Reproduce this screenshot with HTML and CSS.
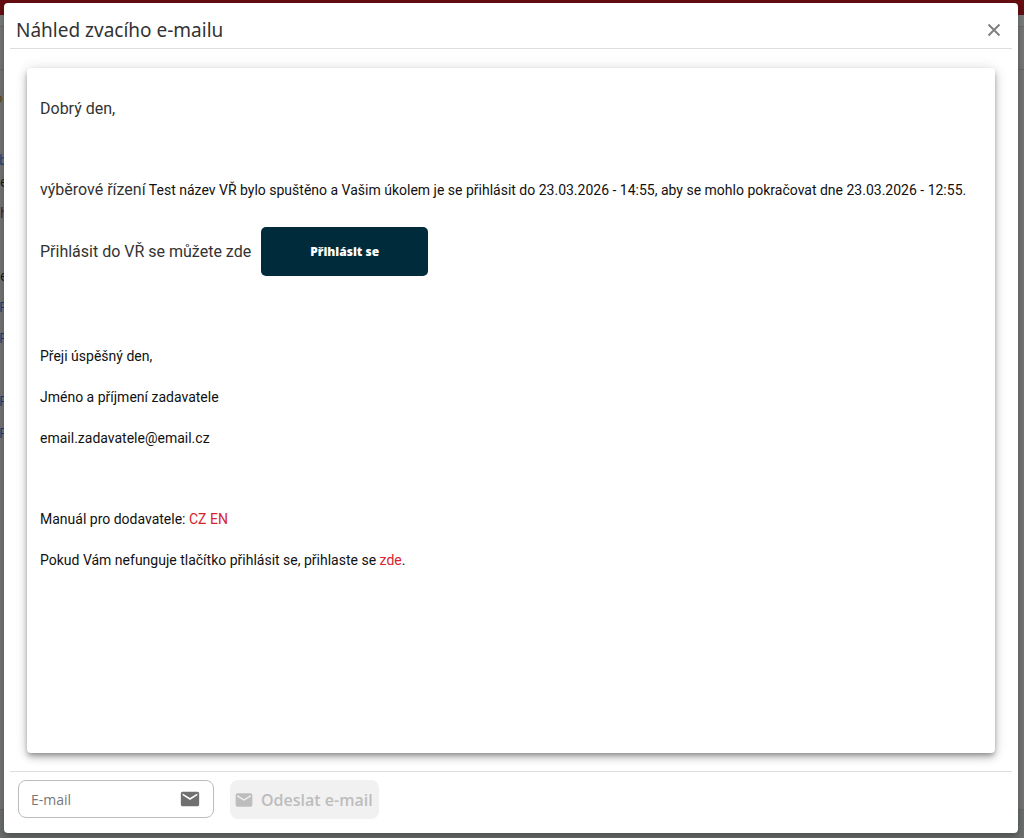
FILE: index.html
```html
<!DOCTYPE html>
<html lang="cs">
<head>
<meta charset="utf-8">
<meta name="viewport" content="width=device-width, initial-scale=1">
<title>Náhled zvacího e-mailu</title>
<link rel="stylesheet" href="styles.css">
</head>
<body>
<div class="page">
  <div class="backdrop" aria-hidden="true">
    <div class="backdrop-bar"></div>
    <div class="backdrop-tabs"></div>
    <div class="backdrop-body"></div>
    <div class="backdrop-foot"></div>
    <span class="trace trace-gold" style="top:88px">o</span>
    <span class="trace trace-blue" style="top:150px">b</span>
    <span class="trace" style="top:172px">e</span>
    <span class="trace trace-red" style="top:203px">h</span>
    <span class="trace" style="top:266px">e</span>
    <span class="trace trace-blue" style="top:297px">P</span>
    <span class="trace trace-blue" style="top:328px">P</span>
    <span class="trace trace-blue" style="top:391px">P</span>
    <span class="trace trace-blue" style="top:423px">P</span>
  </div>
  <section class="dialog" role="dialog" aria-modal="true" aria-labelledby="dialog-title">
    <header class="dialog-header">
      <h1 class="dialog-title" id="dialog-title">Náhled zvacího e-mailu</h1>
      <button class="close" type="button" aria-label="Zavřít">
        <svg width="14" height="14" viewBox="0 0 14 14"><path d="M1.500 1.500l11 11M12.500 1.500l-11 11" fill="none" stroke="currentColor" stroke-width="2"/></svg>
      </button>
    </header>
    <main class="dialog-content">
      <article class="card">
        <p class="lead">Dobrý den,</p>
        <p class="blank"></p>
        <p><span class="lead">výběrové řízení</span> Test název VŘ bylo spuštěno a Vašim úkolem je se přihlásit do 23.03.2026 - 14:55, aby se mohlo pokračovat dne 23.03.2026 - 12:55.</p>
        <div class="login-row">
          <span class="lead">Přihlásit do VŘ se můžete zde</span>
          <a class="login" href="#">Přihlásit se</a>
        </div>
        <p class="blank"></p>
        <p>Přeji úspěšný den,</p>
        <p>Jméno a příjmení zadavatele</p>
        <p>email.zadavatele@email.cz</p>
        <p class="blank"></p>
        <p>Manuál pro dodavatele: <a class="link" href="#">CZ</a> <a class="link" href="#">EN</a></p>
        <p>Pokud Vám nefunguje tlačítko přihlásit se, přihlaste se <a class="link" href="#">zde</a>.</p>
      </article>
    </main>
    <footer class="dialog-footer">
      <label class="field">
        <input class="field-input" type="email" placeholder="E-mail" aria-label="E-mail">
        <svg class="field-icon" width="22" height="22" viewBox="0 0 24 24"><path fill="currentColor" d="M20 4H4c-1.100 0-1.990.9-1.990 2L2 18c0 1.100.9 2 2 2h16c1.100 0 2-.9 2-2V6c0-1.100-.9-2-2-2zm0 4l-8 5-8-5V6l8 5 8-5v2z"/></svg>
      </label>
      <button class="send" type="button" disabled>
        <svg width="20" height="20" viewBox="0 0 24 24"><path fill="currentColor" d="M20 4H4c-1.100 0-1.990.9-1.990 2L2 18c0 1.100.9 2 2 2h16c1.100 0 2-.9 2-2V6c0-1.100-.9-2-2-2zm0 4l-8 5-8-5V6l8 5 8-5v2z"/></svg>
        <span>Odeslat e-mail</span>
      </button>
    </footer>
  </section>
</div>
</body>
</html>
```
FILE: styles.css
```css
* { box-sizing: border-box; }
body {
  margin: 0;
  font-family: "Open Sans", "Noto Sans", sans-serif;
  font-size: 14px;
  color: #111;
}
.page {
  position: relative;
  display: flex;
  min-height: 100vh;
  padding: 3px 6px 5px 4px;
}
.backdrop {
  position: absolute;
  inset: 0;
  display: flex;
  flex-direction: column;
  overflow: hidden;
  background: #757575;
}
.backdrop-bar { height: 15px; background: #650d12; }
.backdrop-tabs { height: 12px; background: #7a7d7d; border-bottom: 1px solid #6b6b6b; }
.backdrop-body { flex: 1; background: linear-gradient(#777 42px, #686868 42px, #686868 43px, #757575 43px); }
.backdrop-foot { height: 29px; background: #6c6f6f; border-top: 1px solid #666; }
.trace {
  position: absolute;
  left: 0;
  line-height: 20px;
  color: #151515;
}
.trace-gold { left: -6px; color: #5a4510; }
.trace-blue { left: -1px; color: #0f4478; }
.trace-red { color: #4a1518; }
.dialog {
  position: relative;
  display: flex;
  flex: 1;
  flex-direction: column;
  min-width: 0;
  padding: 0 6px;
  border-radius: 4px;
  background: #fff;
  box-shadow: 0 4px 8px rgba(0, 0, 0, .3);
}
.dialog-header {
  display: flex;
  align-items: center;
  justify-content: space-between;
  height: 46px;
  padding: 8px 10px 0 6px;
  border-bottom: 1px solid #dedede;
}
.dialog-title {
  margin: 0;
  font-family: "Noto Sans", "Open Sans", sans-serif;
  font-size: 19px;
  line-height: 28px;
  font-weight: 400;
  color: #333;
}
.close {
  display: flex;
  padding: 1px;
  border: 0;
  background: none;
  color: #808080;
}
.dialog-content {
  display: flex;
  flex: 1;
  flex-direction: column;
  padding: 19px 17px 18px;
}
.card {
  display: flex;
  flex: 1;
  flex-direction: column;
  gap: 17px;
  padding: 29px 12px 24px 13px;
  border-radius: 4px;
  box-shadow: 0 3px 5px -1px rgba(0, 0, 0, .3), 0 5px 8px rgba(0, 0, 0, .16), 0 1px 14px rgba(0, 0, 0, .14);
  font-family: Roboto, "Open Sans", sans-serif;
}
.card p {
  margin: 0;
  line-height: 24px;
}
.card .blank { height: 23px; }
.card .lead { font-size: 16px; color: #333; }
.login-row {
  display: flex;
  align-items: center;
  gap: 10px;
  padding: 8px 0 11px;
}
.login {
  padding: 16px 49px;
  border-radius: 5px;
  background: #002b3b;
  color: #fff;
  font-family: "Open Sans", "Noto Sans", sans-serif;
  font-size: 12px;
  line-height: 17px;
  font-weight: 800;
  text-decoration: none;
}
.link { color: #d8232f; text-decoration: none; }
.dialog-footer {
  display: flex;
  gap: 16px;
  align-items: flex-start;
  padding: 8px 8px 14px;
  border-top: 1px solid #dedede;
}
.field {
  display: flex;
  align-items: center;
  width: 196px;
  height: 38px;
  padding: 0 12px;
  border: 1px solid #bdbdbd;
  border-radius: 8px;
  color: #707070;
}
.field-input {
  flex: 1;
  min-width: 0;
  padding: 0;
  border: 0;
  outline: 0;
  background: none;
  font: inherit;
  color: #333;
}
.field-input::placeholder { color: #777; opacity: 1; }
.field-icon { flex: none; }
.send {
  display: flex;
  align-items: center;
  gap: 7px;
  height: 39px;
  padding: 0 6px 0 4px;
  border: 0;
  border-radius: 8px;
  background: #f1f1f1;
  color: #bdbdbd;
  font: 600 16px "Open Sans", "Noto Sans", sans-serif;
}
```
